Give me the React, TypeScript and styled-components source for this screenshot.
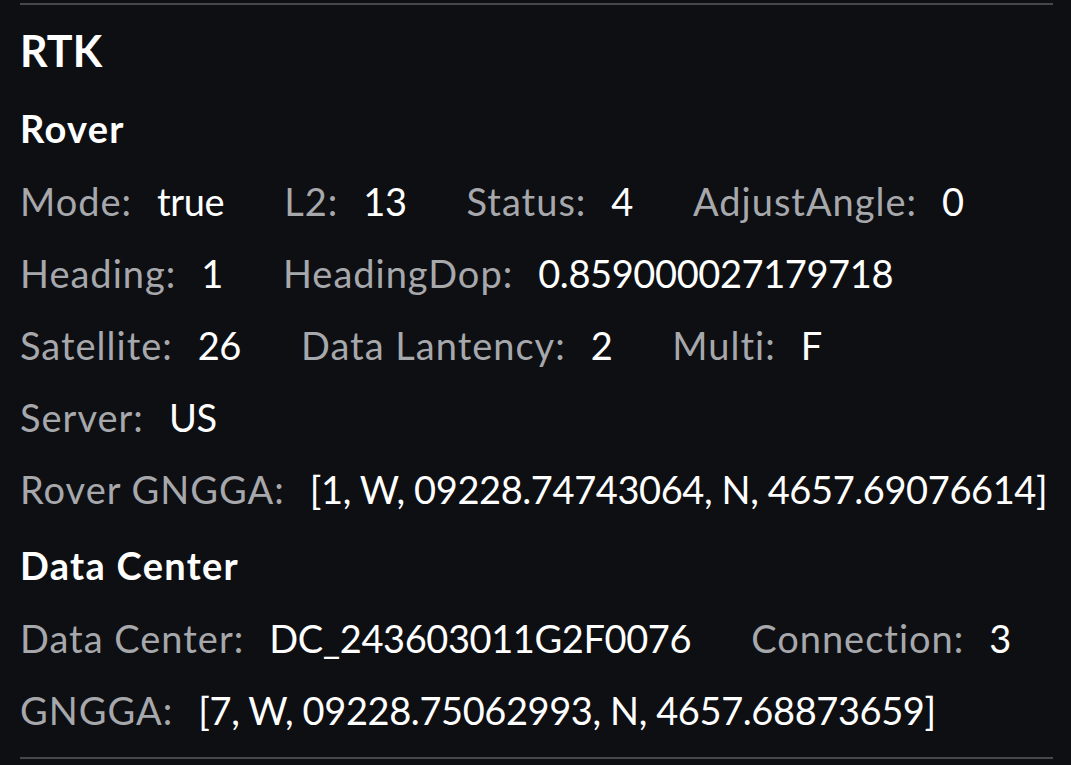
import React from "react";
import styled, { createGlobalStyle } from "styled-components";

interface Field {
  label: string;
  value: string;
}

const GlobalStyle = createGlobalStyle`
  html, body {
    margin: 0;
    padding: 0;
    background: #0e0f13;
  }
  body {
    font-family: Lato, "Noto Sans", sans-serif;
    color: #ffffff;
  }
`;

// rover rows
const roverRows: Field[][] = [
  [
    { label: "Mode:", value: "true" },
    { label: "L2:", value: "13" },
    { label: "Status:", value: "4" },
    { label: "AdjustAngle:", value: "0" },
  ],
  [
    { label: "Heading:", value: "1" },
    { label: "HeadingDop:", value: "0.859000027179718" },
  ],
  [
    { label: "Satellite:", value: "26" },
    { label: "Data Lantency:", value: "2" },
    { label: "Multi:", value: "F" },
  ],
  [{ label: "Server:", value: "US" }],
  [{ label: "Rover GNGGA:", value: "[1, W, 09228.74743064, N, 4657.69076614]" }],
];

// data center rows
const centerRows: Field[][] = [
  [
    { label: "Data Center:", value: "DC_243603011G2F0076" },
    { label: "Connection:", value: "3" },
  ],
  [{ label: "GNGGA:", value: "[7, W, 09228.75062993, N, 4657.68873659]" }],
];

const FieldRows = ({ rows }: { rows: Field[][] }) => (
  <Rows>
    {rows.map((row, i) => (
      <Row key={i}>
        {row.map((f) => (
          <Pair key={f.label}>
            <Label>{f.label}</Label>
            <Value>{f.value}</Value>
          </Pair>
        ))}
      </Row>
    ))}
  </Rows>
);

const App = () => {
  return (
    <>
      <GlobalStyle />
      <Panel>
        <Divider />
        <Title>RTK</Title>
        <SectionTitle>Rover</SectionTitle>
        <FieldRows rows={roverRows} />
        <SectionTitle spaced>Data Center</SectionTitle>
        <FieldRows rows={centerRows} />
        <Divider bottom />
      </Panel>
    </>
  );
};

export default App;

const Panel = styled.div`
  width: 1071px;
  height: 765px;
  box-sizing: border-box;
  padding: 3px 18px 0 20px;
  display: flex;
  flex-direction: column;
  overflow: hidden;
`;

const Divider = styled.div<{ bottom?: boolean }>`
  height: 2px;
  background: #46474c;
  margin-top: ${(p) => (p.bottom ? "11px" : "0")};
`;

const Title = styled.div`
  padding-top: 5px;
  font-size: 43px;
  line-height: 82px;
  font-weight: 700;
  color: #ffffff;
`;

const SectionTitle = styled.div<{ spaced?: boolean }>`
  margin-top: ${(p) => (p.spaced ? "4px" : "0")};
  font-size: 38px;
  line-height: 73px;
  font-weight: 700;
  letter-spacing: 1.3px;
  color: #ffffff;
`;

const Rows = styled.div`
  display: flex;
  flex-direction: column;
`;

const Row = styled.div`
  display: flex;
  gap: 60px;
  height: 72px;
  line-height: 72px;
  font-size: 38px;
  white-space: nowrap;
`;

const Pair = styled.div`
  display: flex;
  gap: 25px;
`;

const Label = styled.span`
  color: #a7a8ac;
  letter-spacing: 1px;
`;

const Value = styled.span`
  color: #ffffff;
  letter-spacing: -0.4px;
`;
